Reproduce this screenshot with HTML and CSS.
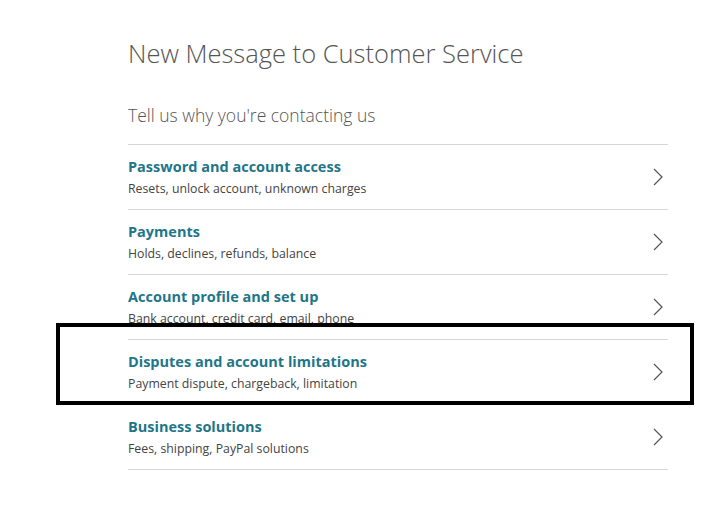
FILE: index.html
```html
<!DOCTYPE html>
<html>
<head>
<meta charset="utf-8">
<link rel="stylesheet" href="styles.css">
</head>
<body>
<main class="page">
  <h1 class="title">New Message to Customer Service</h1>
  <p class="subtitle">Tell us why you're contacting us</p>
  <ul class="topics">
    <li class="topic">
      <div class="text"><div class="name">Password and account access</div><div class="desc">Resets, unlock account, unknown charges</div></div>
      <svg class="chev" width="10" height="18" viewBox="0 0 10 18"><path d="M1 1 L9 9 L1 17" fill="none" stroke="#555" stroke-width="1.2"/></svg>
    </li>
    <li class="topic">
      <div class="text"><div class="name">Payments</div><div class="desc">Holds, declines, refunds, balance</div></div>
      <svg class="chev" width="10" height="18" viewBox="0 0 10 18"><path d="M1 1 L9 9 L1 17" fill="none" stroke="#555" stroke-width="1.2"/></svg>
    </li>
    <li class="topic">
      <div class="text"><div class="name">Account profile and set up</div><div class="desc">Bank account, credit card, email, phone</div></div>
      <svg class="chev" width="10" height="18" viewBox="0 0 10 18"><path d="M1 1 L9 9 L1 17" fill="none" stroke="#555" stroke-width="1.2"/></svg>
    </li>
    <li class="topic">
      <div class="text"><div class="name">Disputes and account limitations</div><div class="desc">Payment dispute, chargeback, limitation</div></div>
      <svg class="chev" width="10" height="18" viewBox="0 0 10 18"><path d="M1 1 L9 9 L1 17" fill="none" stroke="#555" stroke-width="1.2"/></svg>
    </li>
    <li class="topic">
      <div class="text"><div class="name">Business solutions</div><div class="desc">Fees, shipping, PayPal solutions</div></div>
      <svg class="chev" width="10" height="18" viewBox="0 0 10 18"><path d="M1 1 L9 9 L1 17" fill="none" stroke="#555" stroke-width="1.2"/></svg>
    </li>
  </ul>
  <div class="highlight"></div>
</main>
</body>
</html>
```
FILE: styles.css
```css
html, body { margin: 0; padding: 0; background: #fff; }
body { font-family: "Open Sans", "Noto Sans", sans-serif; }
.page { position: relative; width: 540px; margin-left: 128px; padding-top: 36px; }
.title { margin: 0; font-size: 25.5px; font-weight: 300; color: #555; line-height: 34px; }
.subtitle { margin: 34px 0 0; font-size: 17.5px; font-weight: 300; color: #555; line-height: 22px; }
.topics { list-style: none; margin: 18px 0 0; padding: 0; border-top: 1px solid #d6d6d6; }
.topic { height: 64px; border-bottom: 1px solid #d6d6d6; display: flex; align-items: center; justify-content: space-between; }
.text { padding-top: 1px; }
.name { font-size: 14.5px; font-weight: 700; color: #1f7689; line-height: 20px; }
.desc { font-size: 12.3px; color: #444; line-height: 20px; margin-top: 2px; }
.chev { margin-right: 5px; }
.highlight { position: absolute; left: -72px; top: 323px; width: 630px; height: 74px; border: 4px solid #000; }
```
